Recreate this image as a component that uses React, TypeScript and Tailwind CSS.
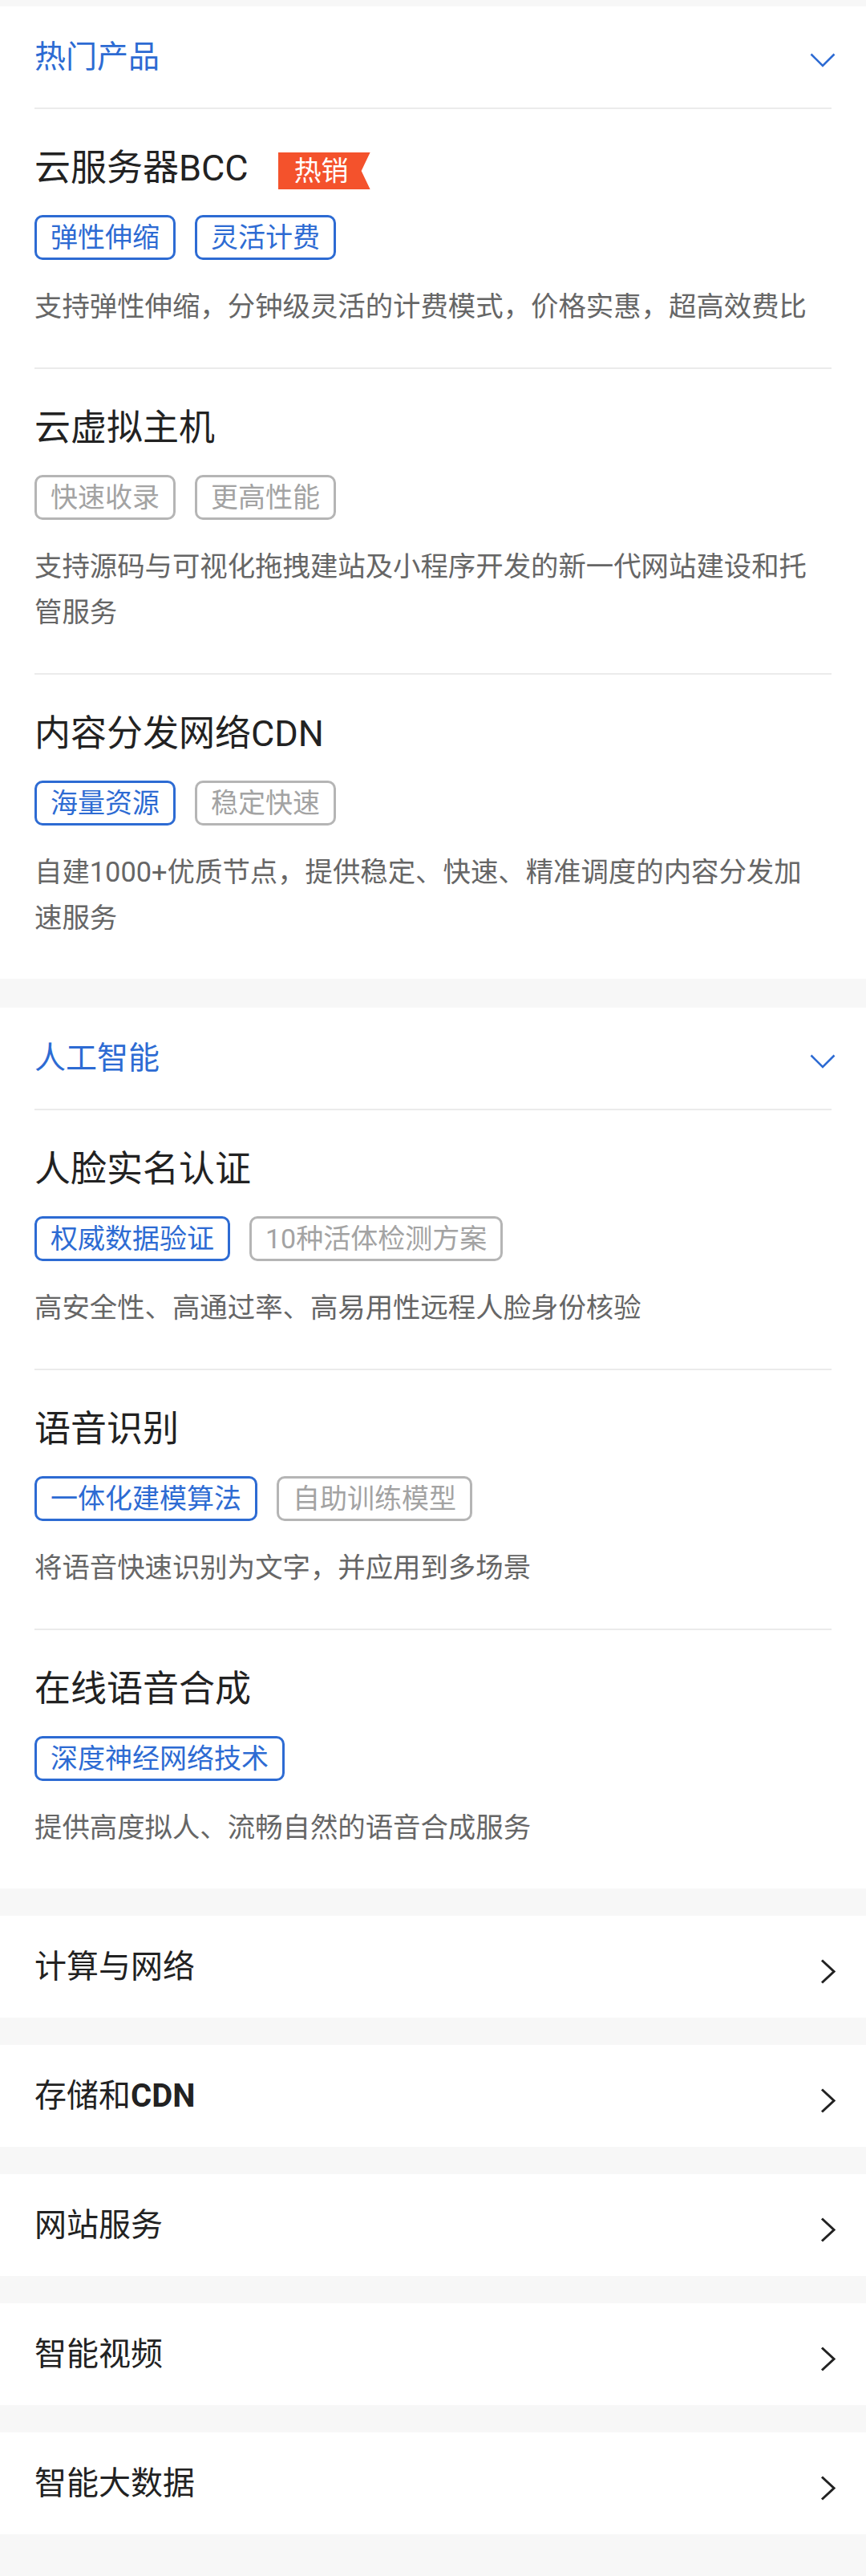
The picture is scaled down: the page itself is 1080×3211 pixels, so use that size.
import type { ReactNode } from 'react';

type Tag = { label: string; active: boolean };

interface Product {
  name: string;
  hot?: boolean;
  tags: Tag[];
  desc: string;
}

interface Section {
  title: string;
  items: Product[];
}

const sections: Section[] = [
  {
    title: '热门产品',
    items: [
      {
        name: '云服务器BCC',
        hot: true,
        tags: [
          { label: '弹性伸缩', active: true },
          { label: '灵活计费', active: true },
        ],
        desc: '支持弹性伸缩，分钟级灵活的计费模式，价格实惠，超高效费比',
      },
      {
        name: '云虚拟主机',
        tags: [
          { label: '快速收录', active: false },
          { label: '更高性能', active: false },
        ],
        desc: '支持源码与可视化拖拽建站及小程序开发的新一代网站建设和托管服务',
      },
      {
        name: '内容分发网络CDN',
        tags: [
          { label: '海量资源', active: true },
          { label: '稳定快速', active: false },
        ],
        desc: '自建1000+优质节点，提供稳定、快速、精准调度的内容分发加速服务',
      },
    ],
  },
  {
    title: '人工智能',
    items: [
      {
        name: '人脸实名认证',
        tags: [
          { label: '权威数据验证', active: true },
          { label: '10种活体检测方案', active: false },
        ],
        desc: '高安全性、高通过率、高易用性远程人脸身份核验',
      },
      {
        name: '语音识别',
        tags: [
          { label: '一体化建模算法', active: true },
          { label: '自助训练模型', active: false },
        ],
        desc: '将语音快速识别为文字，并应用到多场景',
      },
      {
        name: '在线语音合成',
        tags: [{ label: '深度神经网络技术', active: true }],
        desc: '提供高度拟人、流畅自然的语音合成服务',
      },
    ],
  },
];

const categories: { key: string; label: ReactNode }[] = [
  { key: 'compute', label: '计算与网络' },
  {
    key: 'storage',
    label: (
      <>
        存储和<span className="font-bold">CDN</span>
      </>
    ),
  },
  { key: 'site', label: '网站服务' },
  { key: 'video', label: '智能视频' },
  { key: 'bigdata', label: '智能大数据' },
];

function ChevronDown() {
  return (
    <svg width="32" height="18" viewBox="0 0 32 18" className="mr-[-5px] mt-[8px] shrink-0">
      <polyline
        points="1.5,1.5 16,16 30.5,1.5"
        fill="none"
        stroke="#2d6bd3"
        strokeWidth="2.6"
        strokeLinejoin="miter"
      />
    </svg>
  );
}

function ChevronRight() {
  return (
    <svg width="19" height="31" viewBox="0 0 19 31" className="mt-[11px] shrink-0">
      <polyline points="2,1.5 17,15.5 2,29.5" fill="none" stroke="#222" strokeWidth="3" />
    </svg>
  );
}

function TagChip({ tag }: { tag: Tag }) {
  return (
    <span
      className={
        tag.active
          ? 'flex h-[56px] items-center rounded-[10px] border-[3px] border-[#2d6bd3] px-[17px] text-[34px] leading-none text-[#2d6bd3]'
          : 'flex h-[56px] items-center rounded-[10px] border-[3px] border-[#b5b5b5] px-[17px] text-[34px] leading-none text-[#a3a3a3]'
      }
    >
      {tag.label}
    </span>
  );
}

function ProductItem({ item, first }: { item: Product; first: boolean }) {
  return (
    <div className={first ? 'pt-[46px] pb-[47px]' : 'border-t-2 border-[#ebebeb] pt-[46px] pb-[47px]'}>
      <div className="flex h-[56px] items-center">
        <h3 className="text-[45px] leading-[56px] font-normal text-[#222]">{item.name}</h3>
        {item.hot ? (
          <span className="ml-[37px] mt-[6px] flex h-[46px] w-[115px] items-center bg-[#f4522c] pl-[20px] text-[34px] leading-none text-white [clip-path:polygon(0_0,115px_0,104px_50%,115px_100%,0_100%)]">
            热销
          </span>
        ) : null}
      </div>
      <div className="mt-[30px] flex gap-[24px]">
        {item.tags.map((tag) => (
          <TagChip key={tag.label} tag={tag} />
        ))}
      </div>
      <p className="mt-[30px] max-w-[975px] text-[34.4px] leading-[57px] text-[#666]">{item.desc}</p>
    </div>
  );
}

function ProductSection({ section }: { section: Section }) {
  return (
    <section className="bg-white px-[43px]">
      <div className="flex h-[128px] items-center justify-between border-b-2 border-[#ebebeb]">
        <h2 className="text-[39px] leading-none font-normal text-[#2d6bd3]">{section.title}</h2>
        <ChevronDown />
      </div>
      {section.items.map((item, i) => (
        <ProductItem key={item.name} item={item} first={i === 0} />
      ))}
    </section>
  );
}

export default function App() {
  return (
    <div className="min-h-[3211px] bg-[#f7f7f7] pt-[8px] pb-[50px] font-[Roboto,'Noto_Sans_CJK_SC',sans-serif]">
      <ProductSection section={sections[0]} />
      <div className="mt-[36px]">
        <ProductSection section={sections[1]} />
      </div>
      <div className="mt-[34px] flex flex-col gap-[34px]">
        {categories.map((cat) => (
          <div
            key={cat.key}
            className="flex h-[127px] items-center justify-between bg-white pl-[43px] pr-[38px]"
          >
            <span className="text-[40px] leading-none text-[#222]">{cat.label}</span>
            <ChevronRight />
          </div>
        ))}
      </div>
    </div>
  );
}
